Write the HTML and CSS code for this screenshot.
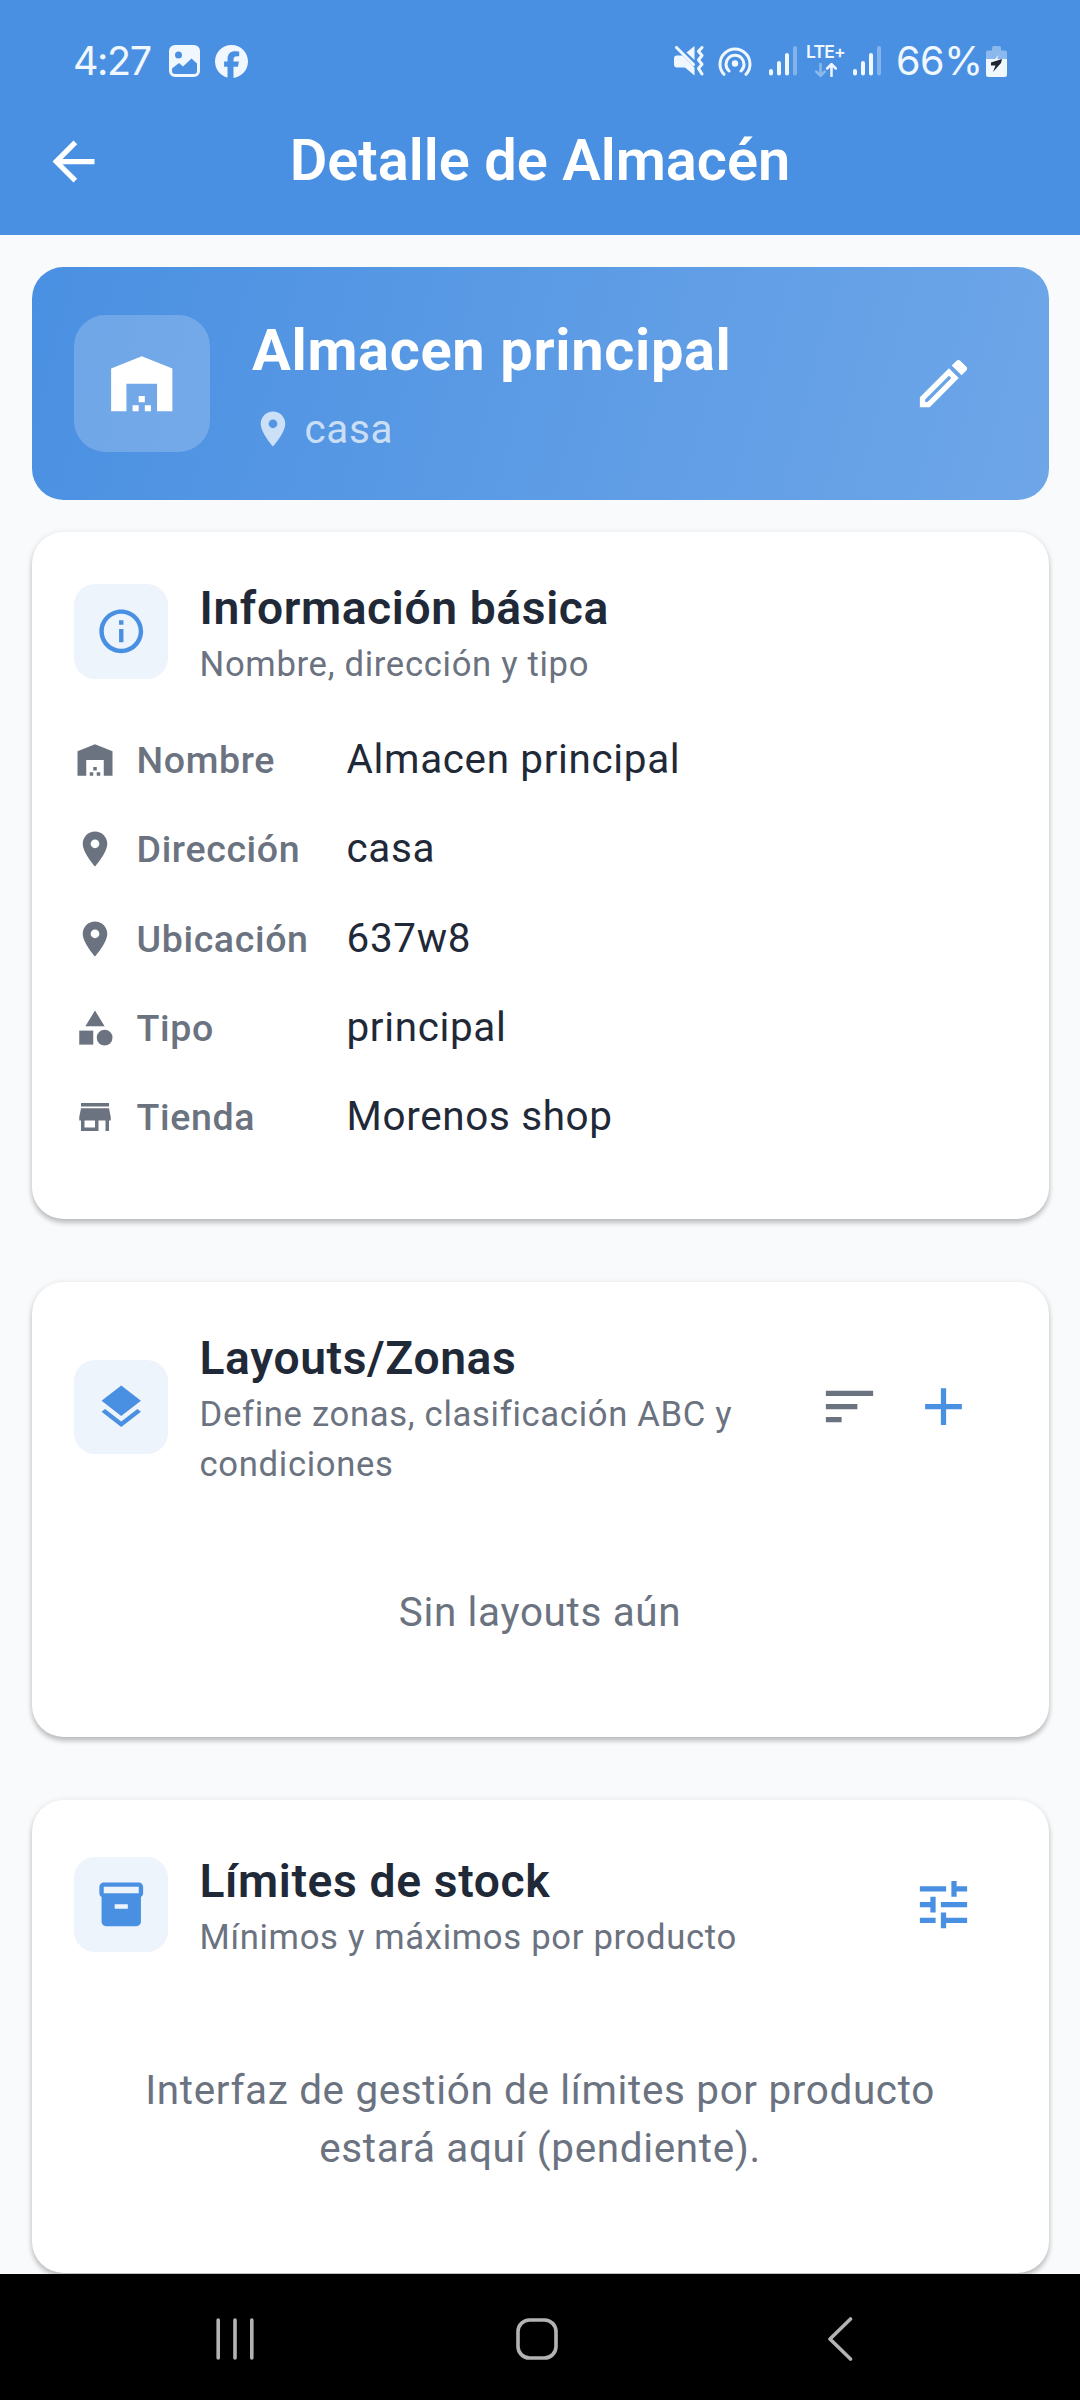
FILE: index.html
```html
<!DOCTYPE html>
<html lang="es">
<head>
<meta charset="utf-8">
<title>Detalle de Almacén</title>
<link rel="stylesheet" href="styles.css">
</head>
<body>
<svg class="defs" width="0" height="0">
  <symbol id="warehouse" viewBox="0 0 24 24"><path d="M22 21V7L12 3 2 7v14h5v-9h10v9h5zm-11-2H9v2h2v-2zm2-3h-2v2h2v-2zm2 3h-2v2h2v-2z"/></symbol>
  <symbol id="pin" viewBox="0 0 24 24"><path d="M12 2C8.13 2 5 5.13 5 9c0 5.25 7 13 7 13s7-7.75 7-13c0-3.87-3.13-7-7-7zm0 9.5a2.5 2.5 0 0 1 0-5 2.5 2.5 0 0 1 0 5z"/></symbol>
  <symbol id="signal" viewBox="0 0 28 30"><rect x="0" y="23" width="4" height="6.5" rx="2"/><rect x="8" y="15" width="4" height="14.5" rx="2"/><rect x="16" y="7" width="4" height="22.5" rx="2"/><rect x="24" y="0" width="4" height="29.5" rx="2" opacity=".35"/></symbol>
</svg>
<div class="screen">
  <header class="top">
    <div class="status">
      <div class="status-left">
        <span class="clock">4:27</span>
        <svg class="st-image" viewBox="0 0 31 32"><path fill-rule="evenodd" d="M6 0h19a6 6 0 0 1 6 6v20a6 6 0 0 1-6 6H6a6 6 0 0 1-6-6V6a6 6 0 0 1 6-6zM9.500 6.500a3.500 3.500 0 1 0 0 7 3.500 3.500 0 0 0 0-7zM3 23.500V26a3 3 0 0 0 3 3h19a3 3 0 0 0 3-3v-7.500l-5.500-5-8.500 8-4-3.500z"/></svg>
        <svg class="st-fb" viewBox="0 0 24 24"><path d="M24 12.073c0-6.627-5.373-12-12-12s-12 5.373-12 12c0 5.630 3.880 10.350 9.100 11.650v-7.980H6.630v-3.670H9.100v-1.580c0-4.080 1.850-5.980 5.860-5.980.76 0 2.070.15 2.610.3v3.320c-.28-.03-.78-.04-1.390-.04-1.970 0-2.730.75-2.730 2.680v1.300h3.920l-.67 3.670h-3.250v8.240C19.390 23.270 24 18.210 24 12.073z"/></svg>
      </div>
      <div class="status-right">
        <svg class="st-mute" viewBox="0 0 30 30"><path d="M3 9.500h5.500L20.500 21.500V29.500L11 21.500H3a3 3 0 0 1-3-3v-6a3 3 0 0 1 3-3z"/><path d="M12.500 6.500L20.500 0v14z"/><path d="M2.500 1.500l17 17" class="line"/><path d="M28 1.500l-3.500 3.800 3.500 4.200-3.500 4.500 3.500 4.200-3.500 4.200 3.500 5.600" class="line"/></svg>
        <svg class="st-hotspot" viewBox="0 0 34 30"><circle cx="17" cy="17.500" r="3.200"/><path d="M11 25a9 9 0 1 1 12 0M6 28.300a15 15 0 1 1 22 0" class="line"/></svg>
        <svg class="st-signal"><use href="#signal"/></svg>
        <div class="lte"><span>LTE+</span>
          <svg viewBox="0 0 22 14"><path d="M5.500 1v12M1.200 8.500l4.300 4.300 4.300-4.300" class="line thin" opacity=".4"/><path d="M16.500 13V1M12.200 5.500l4.300-4.300 4.300 4.300" class="line thin"/></svg>
        </div>
        <svg class="st-signal"><use href="#signal"/></svg>
        <span class="percent">66%</span>
        <svg class="st-battery" viewBox="0 0 21 31"><path d="M6 4.500V2a2 2 0 0 1 2-2h5a2 2 0 0 1 2 2v2.500h4a2 2 0 0 1 2 2V13H0V6.500a2 2 0 0 1 2-2h4z" opacity=".4"/><path d="M0 13h21v15.500a2.500 2.500 0 0 1-2.500 2.500h-16A2.500 2.500 0 0 1 0 28.500z"/><path d="M12.500 9L4.500 18h5z"/><path d="M5 16.500L16 13l-1 4L7 26l2.500-6.500H5z" class="bolt"/></svg>
      </div>
    </div>
    <div class="appbar">
      <svg class="icon-lg" viewBox="0 0 24 24"><path d="M20 11H7.830l5.590-5.590L12 4l-8 8 8 8 1.410-1.410L7.830 13H20v-2z"/></svg>
      <h1>Detalle de Almacén</h1>
    </div>
  </header>

  <main>
    <section class="hero">
      <div class="hero-badge"><svg><use href="#warehouse"/></svg></div>
      <div class="hero-text">
        <h2>Almacen principal</h2>
        <p><svg class="icon-sm"><use href="#pin"/></svg><span>casa</span></p>
      </div>
      <div class="btn"><svg class="icon-lg" viewBox="0 0 24 24"><path d="M14.060 9.020l.92.92L5.920 19H5v-.92l9.060-9.060M17.660 3c-.25 0-.51.1-.7.290l-1.830 1.830 3.750 3.750 1.830-1.830c.39-.39.39-1.020 0-1.410l-2.340-2.340c-.2-.2-.45-.29-.71-.29zm-3.600 3.190L3 17.250V21h3.750L17.810 9.940l-3.750-3.750z"/></svg></div>
    </section>

    <section class="card info">
      <div class="card-head">
        <div class="badge"><svg viewBox="0 0 24 24"><path d="M11 7h2v2h-2zm0 4h2v6h-2zm1-9C6.480 2 2 6.480 2 12s4.480 10 10 10 10-4.480 10-10S17.520 2 12 2zm0 18c-4.410 0-8-3.590-8-8s3.590-8 8-8 8 3.590 8 8-3.590 8-8 8z"/></svg></div>
        <div class="head-text"><h3>Información básica</h3><p>Nombre, dirección y tipo</p></div>
      </div>
      <dl>
        <div class="row"><svg class="icon-sm"><use href="#warehouse"/></svg><dt>Nombre</dt><dd>Almacen principal</dd></div>
        <div class="row"><svg class="icon-sm"><use href="#pin"/></svg><dt>Dirección</dt><dd>casa</dd></div>
        <div class="row"><svg class="icon-sm"><use href="#pin"/></svg><dt>Ubicación</dt><dd>637w8</dd></div>
        <div class="row"><svg class="icon-sm" viewBox="0 0 24 24"><path d="M12 2l-5.500 9h11z"/><circle cx="17.500" cy="17.500" r="4.500"/><path d="M3 13.500h8v8H3z"/></svg><dt>Tipo</dt><dd>principal</dd></div>
        <div class="row"><svg class="icon-sm" viewBox="0 0 24 24"><path d="M20 4H4v2h16V4zm1 10v-2l-1-5H4l-1 5v2h1v6h10v-6h4v6h2v-6h1zm-9 4H6v-4h6v4z"/></svg><dt>Tienda</dt><dd>Morenos shop</dd></div>
      </dl>
    </section>

    <section class="card">
      <div class="card-head">
        <div class="badge"><svg viewBox="0 0 24 24"><path d="M11.990 18.540l-7.370-5.730L3 14.070l9 7 9-7-1.630-1.270-7.380 5.740zM12 16l7.360-5.730L21 9l-9-7-9 7 1.630 1.270L12 16z"/></svg></div>
        <div class="head-text"><h3>Layouts/Zonas</h3><p>Define zonas, clasificación ABC y condiciones</p></div>
        <div class="btn btn-narrow gray"><svg class="icon-lg" viewBox="0 0 24 24"><path d="M3 18h6v-2H3v2zM3 6v2h18V6H3zm0 7h12v-2H3v2z"/></svg></div>
        <div class="btn btn-add"><svg class="icon-lg" viewBox="0 0 24 24"><path d="M19 13h-6v6h-2v-6H5v-2h6V5h2v6h6v2z"/></svg></div>
      </div>
      <p class="empty">Sin layouts aún</p>
    </section>

    <section class="card">
      <div class="card-head">
        <div class="badge"><svg viewBox="0 0 24 24"><path d="M20 2H4c-1 0-2 .9-2 2v3.010c0 .72.43 1.340 1 1.690V20c0 1.100 1.100 2 2 2h14c.9 0 2-.9 2-2V8.700c.57-.35 1-.97 1-1.690V4c0-1.100-1-2-2-2zm-5 12H9v-2h6v2zm5-7H4V4h16v3z"/></svg></div>
        <div class="head-text"><h3>Límites de stock</h3><p>Mínimos y máximos por producto</p></div>
        <div class="btn"><svg class="icon-lg" viewBox="0 0 24 24"><path d="M3 17v2h6v-2H3zM3 5v2h10V5H3zm10 16v-2h8v-2h-8v-2h-2v6h2zM7 9v2H3v2h4v2h2V9H7zm14 4v-2H11v2h10zm-6-4h2V7h4V5h-4V3h-2v6z"/></svg></div>
      </div>
      <p class="empty">Interfaz de gestión de límites por producto estará aquí (pendiente).</p>
    </section>
  </main>

  <nav>
    <svg class="nav-recents" viewBox="0 0 38 42"><path d="M2.200 2v38M19 2v38M35.800 2v38"/></svg>
    <svg class="nav-home" viewBox="0 0 42 42"><rect x="2" y="2" width="38" height="38" rx="11.500"/></svg>
    <svg class="nav-back" viewBox="0 0 26 44"><path d="M23.500 2L3 22l20.500 20"/></svg>
  </nav>
</div>
</body>
</html>
```
FILE: styles.css
```css
* { box-sizing: border-box; margin: 0; padding: 0; }
body { width: 1080px; height: 2400px; overflow: hidden; font-family: Roboto, "Liberation Sans", sans-serif; background: #f8fafc; }
svg { display: block; flex: none; fill: currentColor; }
.defs { position: absolute; }
.line { fill: none; stroke: currentColor; stroke-width: 3; stroke-linecap: round; stroke-linejoin: round; }
.thin { stroke-width: 2.5; }
.icon-sm { width: 42px; height: 42px; }
.icon-lg { width: 63px; height: 63px; }

.screen { width: 1080px; height: 2400px; display: flex; flex-direction: column; }

.top { height: 235px; flex: none; background: #4a90e2; color: #fff; }
.status { height: 88px; padding: 34px 73px 0 73px; display: flex; justify-content: space-between; color: #f1f7ff; }
.status-left, .status-right { display: flex; align-items: center; height: 54px; }
.clock, .percent { font-family: Inter, sans-serif; font-size: 39.5px; line-height: 54px; white-space: nowrap; }
.clock { width: 96px; letter-spacing: -1.4px; }
.st-image { width: 31px; height: 32px; margin-right: 15px; }
.st-fb { width: 33px; height: 33px; }
.st-mute { width: 30px; height: 30px; margin-right: 14px; }
.st-hotspot { width: 34px; height: 30px; margin-right: 17px; }
.st-signal { width: 28px; height: 30px; }
.lte { width: 37px; height: 32px; margin: 0 9px 0 10px; display: flex; flex-direction: column; align-items: center; justify-content: space-between; }
.lte span { font: 600 17.5px/13px Inter, sans-serif; letter-spacing: -.8px; }
.lte svg { width: 22px; height: 14px; }
.percent { width: 90px; margin-left: 15px; letter-spacing: -.4px; }
.st-battery { width: 21px; height: 31px; }
.bolt { fill: #1c2530; }

.appbar { height: 147px; padding: 0 42px; display: flex; align-items: center; }
.appbar h1 { flex: 1; margin: -4px 63px 0 0; text-align: center; font-size: 57.75px; line-height: 72px; font-weight: 600; }

main { flex: none; height: 2039px; padding: 31.5px 31.5px 0; overflow: hidden; display: flex; flex-direction: column; background: #f8fafc; }

.hero { flex: none; height: 233.5px; margin-bottom: 31.5px; padding: 0 42px; border-radius: 31.5px; display: flex; align-items: center; color: #fff; background: linear-gradient(105deg, #4a90e2, #6ea6e8); }
.hero-badge { width: 136.5px; height: 136.5px; border-radius: 31.5px; display: grid; place-items: center; background: rgba(255,255,255,.2); }
.hero-badge svg { width: 73.5px; height: 73.5px; }
.hero-text { flex: 1; margin-left: 42px; padding-top: 4px; }
.hero-text h2 { font-size: 57.75px; line-height: 76px; font-weight: 700; letter-spacing: .66px; }
.hero-text p { margin-top: 11px; display: flex; align-items: center; gap: 10.5px; font-size: 40.43px; line-height: 60px; letter-spacing: .66px; color: rgba(255,255,255,.7); }
.btn { width: 126px; height: 126px; flex: none; display: grid; place-items: center; }
.btn-narrow { width: 63px; }
.btn-add { height: 63px; }

.card { flex: none; margin-bottom: 63px; padding: 42px; border-radius: 31.5px; background: #fff; box-shadow: 0 4px 5px rgba(0,0,0,.2), 0 1px 7px rgba(0,0,0,.1); }
.card-head { display: flex; align-items: center; color: #4a90e2; }
.badge { width: 94.5px; height: 94.5px; flex: none; border-radius: 21px; display: grid; place-items: center; background: #edf4fc; }
.badge svg { width: 52.5px; height: 52.5px; }
.head-text { flex: 1; margin-left: 31.5px; padding-top: 3px; }
.head-text h3 { font-size: 46.2px; line-height: 63px; font-weight: 600; color: #1f2937; letter-spacing: .63px; }
.head-text p { font-size: 34.65px; line-height: 49.6px; letter-spacing: .68px; color: #6b7280; }
.gray { color: #6b7280; }

dl { margin-top: 39.5px; display: flex; flex-direction: column; gap: 26.25px; }
.info { padding-bottom: 70.6px; }
.row { height: 63px; display: flex; align-items: center; color: #6b7280; }
dt { width: 210px; margin-left: 21px; font-size: 37.54px; line-height: 60px; font-weight: 500; letter-spacing: .64px; }
dd { color: #1f2937; font-size: 40.43px; line-height: 60px; padding-bottom: 2px; letter-spacing: .66px; }

.empty { padding: 93.5px 52.5px 53.5px; text-align: center; font-size: 40.43px; line-height: 58.3px; letter-spacing: .66px; color: #6b7280; }

nav { flex: 1; padding: 4px 227px 0 216px; display: flex; align-items: center; justify-content: space-between; background: #000; }
nav svg { fill: none; stroke: #b3b3b3; stroke-width: 3.6; stroke-linecap: round; stroke-linejoin: round; }
.nav-recents { width: 38px; height: 42px; }
.nav-home { width: 42px; height: 42px; margin-left: -7px; }
.nav-back { width: 26px; height: 44px; }
```
